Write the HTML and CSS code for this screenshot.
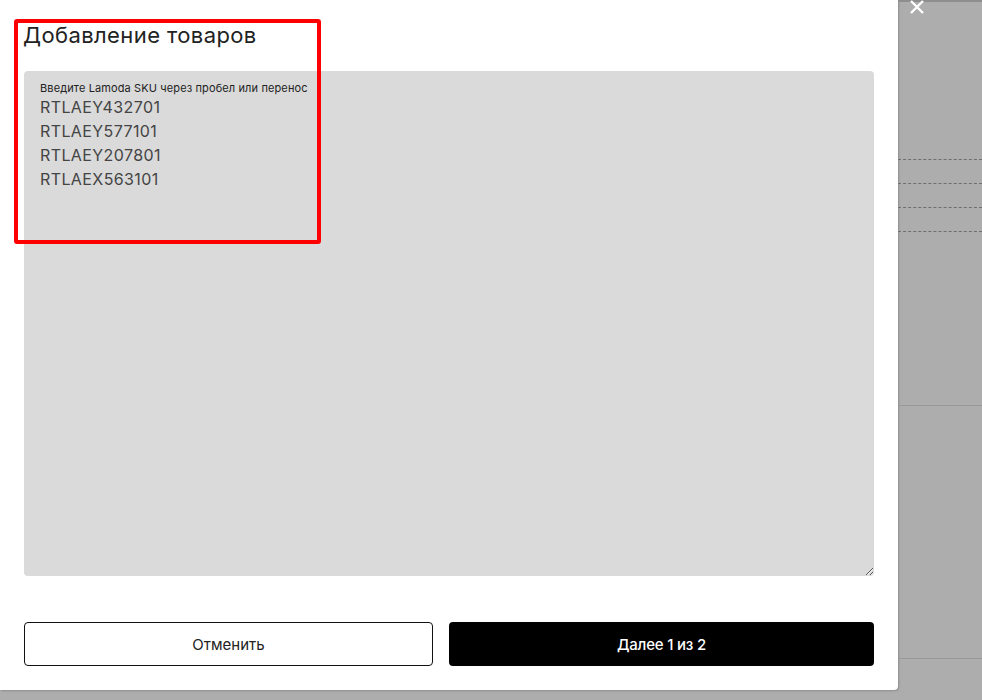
FILE: index.html
```html
<!DOCTYPE html>
<html lang="ru">
<head>
<meta charset="utf-8">
<title>Добавление товаров</title>
<link rel="stylesheet" href="styles.css">
</head>
<body>
<div class="screen">
  <section class="modal">
    <h1 class="modal-title">Добавление товаров</h1>
    <div class="sku-field">
      <label class="sku-label" for="sku">Введите Lamoda SKU через пробел или перенос</label>
      <textarea class="sku-input" id="sku">RTLAEY432701
RTLAEY577101
RTLAEY207801
RTLAEX563101</textarea>
    </div>
    <div class="actions">
      <button class="btn btn-outline">Отменить</button>
      <button class="btn btn-primary">Далее 1 из 2</button>
    </div>
  </section>
  <div class="backdrop">
    <div class="bd-gap-top"></div>
    <div class="bd-row dashed"></div>
    <div class="bd-row dashed"></div>
    <div class="bd-row dashed"></div>
    <div class="bd-row dashed"></div>
    <div class="bd-gap-mid"></div>
    <div class="bd-gap-low"></div>
  </div>
  <button class="close" aria-label="Закрыть">
    <svg width="16" height="16" viewBox="0 0 16 16"><path d="M2 2 L14 14 M14 2 L2 14" stroke="#fff" stroke-width="2.4" fill="none"/></svg>
  </button>
  <div class="highlight"></div>
</div>
</body>
</html>
```
FILE: styles.css
```css
* { box-sizing: border-box; }
html, body { margin: 0; padding: 0; }
body {
  background: #adadad;
  font-family: Inter, "Noto Sans", sans-serif;
  color: #222;
  width: 982px;
  height: 700px;
  overflow: hidden;
}
.screen {
  position: relative;
  display: flex;
  width: 982px;
  height: 700px;
}
.modal {
  width: 898px;
  height: 690px;
  background: #fff;
  border-bottom-right-radius: 4px;
  box-shadow: 1px 1px 2px rgba(0,0,0,0.18);
  padding: 22px 24px 0 24px;
  display: flex;
  flex-direction: column;
  flex: none;
}
.modal-title {
  margin: 0 0 0 -1px;
  font-size: 22px;
  letter-spacing: 0.4px;
  line-height: 26px;
  font-weight: 400;
  color: #222;
}
.sku-field {
  margin-top: 23px;
  height: 505px;
  width: 850px;
  background: #dadada;
  border-radius: 4px;
  padding: 11px 0 0 16px;
  display: flex;
  flex-direction: column;
}
.sku-label {
  font-size: 11px;
  letter-spacing: 0.12px;
  line-height: 12px;
  color: #222;
}
.sku-input {
  flex: 1;
  margin: 1px 0 0 0;
  padding: 0;
  border: none;
  outline: none;
  background: transparent;
  font-family: Inter, "Noto Sans", sans-serif;
  font-size: 16px;
  letter-spacing: 0.4px;
  line-height: 24px;
  color: #444;
  resize: vertical;
}
.actions {
  margin-top: 46px;
  display: flex;
  gap: 16px;
  width: 850px;
}
.btn {
  height: 44px;
  border-radius: 4px;
  font-family: Inter, "Noto Sans", sans-serif;
  font-size: 15px;
  cursor: pointer;
}
.btn-outline {
  width: 409px;
  background: #fff;
  border: 1px solid #111;
  color: #222;
}
.btn-primary {
  flex: 1;
  background: #000;
  border: none;
  color: #fff;
  font-weight: 500;
  letter-spacing: -0.2px;
}
.backdrop {
  flex: 1;
  border-top: 2px solid #8e8e8e;
  display: flex;
  flex-direction: column;
}
.bd-gap-top { height: 157px; }
.bd-row { height: 24px; }
.bd-row.dashed { border-top: 1px dashed #6e6e6e; }
.bd-gap-mid {
  height: 150px;
}
.bd-gap-low {
  height: 254px;
  border-top: 1px solid #979797;
  border-bottom: 1px solid #979797;
}
.close {
  position: absolute;
  left: 909px;
  top: -1px;
  width: 16px;
  height: 16px;
  padding: 0;
  border: none;
  background: transparent;
}
.close svg { display: block; }
.highlight {
  position: absolute;
  left: 14px;
  top: 19px;
  width: 307px;
  height: 225px;
  border: 4px solid #ff0000;
  border-radius: 3px;
  pointer-events: none;
}
```
